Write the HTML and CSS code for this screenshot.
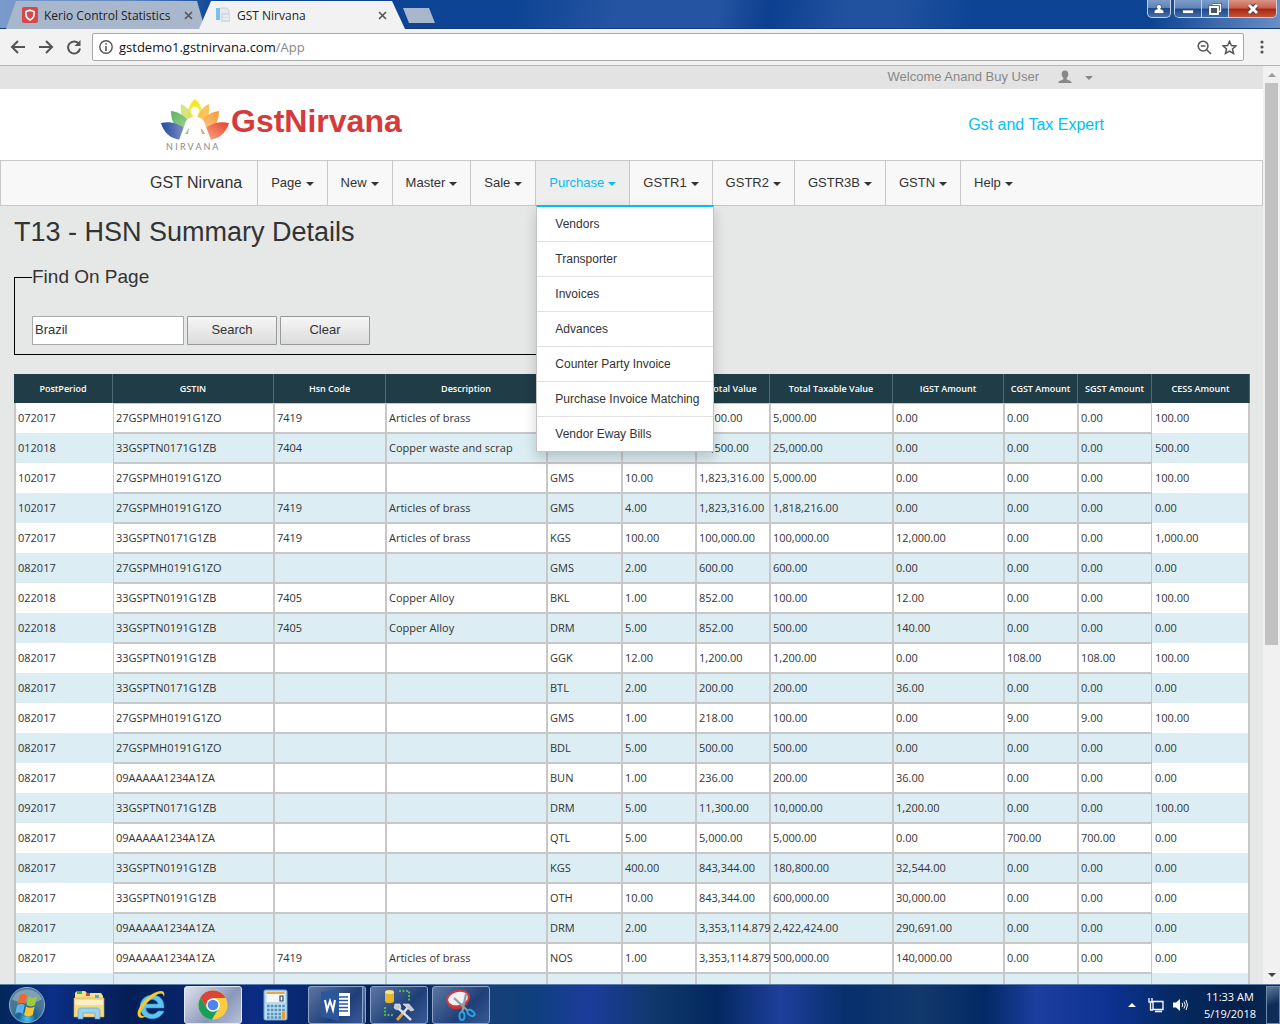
FILE: index.html
```html
<!DOCTYPE html>
<html lang="en">
<head>
<meta charset="utf-8">
<title>GST Nirvana</title>
<link rel="stylesheet" href="styles.css">
</head>
<body>
<div class="tabstrip">
  <div class="tab">
    <svg class="tab-icon" viewBox="0 0 16 16"><rect width="16" height="16" rx="2" fill="#d6494b"/><path d="M8 3.200 12 4.600v3.200c0 2.400-1.800 4-4 5.200-2.200-1.200-4-2.800-4-5.200V4.600z" fill="none" stroke="#fff" stroke-width="1.600"/></svg>
    <span class="tab-title">Kerio Control Statistics</span>
    <button class="tab-close" aria-label="Close tab"><svg viewBox="0 0 9 9"><path d="M1 1l7 7M8 1l-7 7" stroke="#555" stroke-width="1.600"/></svg></button>
  </div>
  <div class="tab tab-active">
    <svg class="tab-icon" viewBox="0 0 16 16"><path d="M1 1h4v12H1z" fill="#7fc0ea"/><path d="M5 1h7l2 3v8H5z" fill="#e3e9ef"/><path d="M6 6h9v9H6z" fill="#d3dbe4"/><path d="M5 1h7l2 3v2" fill="none" stroke="#c3ccd6" stroke-width=".8"/><path d="M8 9h6M8 12h6" stroke="#fff"/></svg>
    <span class="tab-title">GST Nirvana</span>
    <button class="tab-close" aria-label="Close tab"><svg viewBox="0 0 9 9"><path d="M1 1l7 7M8 1l-7 7" stroke="#555" stroke-width="1.600"/></svg></button>
  </div>
  <button class="new-tab" aria-label="New tab"></button>
  <div class="window-buttons">
    <button class="win win-user" aria-label="Profile"><svg viewBox="0 0 14 12"><path d="M7 1.500a2.500 2.500 0 0 1 1.500 4.500c2.500.3 3.500 1.500 3.500 4.500H2c0-3 1-4.200 3.500-4.500A2.500 2.500 0 0 1 7 1.500z" fill="#fff" stroke="#345" stroke-width=".7"/></svg></button>
    <div class="win-group">
      <button class="win" aria-label="Minimize"><svg viewBox="0 0 14 12"><rect x="1.500" y="7" width="11" height="3.500" fill="#fff" stroke="#345" stroke-width=".7"/></svg></button>
      <button class="win" aria-label="Restore"><svg viewBox="0 0 14 12"><path d="M4.500 1.500h8v7H10M2 4h8v7H2z" fill="none" stroke="#345" stroke-width="2.800"/><path d="M4.500 1.500h8v7H10" fill="none" stroke="#fff" stroke-width="1.400"/><path d="M2 4h8v7H2z" fill="#456" stroke="#fff" stroke-width="1.800"/></svg></button>
      <button class="win win-close" aria-label="Close"><svg viewBox="0 0 14 12"><path d="M3 2l8 8M11 2l-8 8" stroke="#533" stroke-width="4.600"/><path d="M3 2l8 8M11 2l-8 8" stroke="#fff" stroke-width="3"/></svg></button>
    </div>
  </div>
</div>
<div class="toolbar">
  <button class="tool" aria-label="Back"><svg viewBox="0 0 16 16"><path d="M15 8H2M8 2L2 8l6 6" /></svg></button>
  <button class="tool" aria-label="Forward"><svg viewBox="0 0 16 16"><path d="M1 8h13M8 2l6 6-6 6"/></svg></button>
  <button class="tool" aria-label="Reload"><svg viewBox="0 0 16 16"><path d="M13 5A6 6 0 1 0 14 9.500"/><path d="M14.500 1v6h-6z" fill="#555" stroke="none"/></svg></button>
  <div class="omnibox">
    <svg class="info" viewBox="0 0 14 14"><circle cx="7" cy="7" r="6.200" fill="none" stroke="#555" stroke-width="1.400"/><path d="M7 6v5M7 3.200v1.600" stroke="#555" stroke-width="1.600"/></svg>
    <span class="url">gstdemo1.gstnirvana.com<span class="path">/App</span></span>
    <svg class="omni-icon" viewBox="0 0 16 16"><circle cx="6.500" cy="6.500" r="5.200"/><path d="M10.300 10.300l4.700 4.700M4 6.500h5"/></svg>
    <svg class="omni-icon" viewBox="0 0 16 16"><path d="M8 1.400l2 4.400 4.900.5-3.700 3.200 1.100 4.800L8 11.800l-4.300 2.500 1.100-4.800L1.100 6.300 6 5.800z"/></svg>
  </div>
  <button class="menu-dots" aria-label="Menu"><svg viewBox="0 0 4 16"><circle cx="2" cy="3" r="1.600"/><circle cx="2" cy="8" r="1.600"/><circle cx="2" cy="13" r="1.600"/></svg></button>
</div>

<div class="viewport">
<div class="page">
  <div class="welcome"><div class="container welcome-inner">
    <span>Welcome Anand Buy User</span>
    <svg class="person" viewBox="0 0 14 14"><path d="M7 .5c2.200 0 3.300 1.500 3.300 3.500S9.300 7.500 8.600 8.200v1c1 .9 4.900 1.300 5.200 3.800H.2c.3-2.500 4.200-2.900 5.200-3.800v-1C4.700 7.500 3.700 6 3.700 4S4.800.5 7 .5z" fill="#888"/></svg>
    <span class="caret"></span>
  </div></div>
  <header class="masthead"><div class="container masthead-inner">
    <svg class="logo" viewBox="0 0 70 52" role="img" aria-label="Nirvana">
      <defs>
        <linearGradient id="b" x2="1"><stop stop-color="#1d4a9e"/><stop offset="1" stop-color="#8f94c6"/></linearGradient>
        <linearGradient id="g" x2="1" y2="1"><stop stop-color="#46a948"/><stop offset="1" stop-color="#a9d7a0"/></linearGradient>
        <linearGradient id="y" x2="0" y2="1"><stop stop-color="#f8e400"/><stop offset="1" stop-color="#f6f0a0"/></linearGradient>
        <linearGradient id="o" x1="1" x2="0" y2="1"><stop stop-color="#f5921e"/><stop offset="1" stop-color="#fbc88a"/></linearGradient>
        <linearGradient id="r" x1="1" x2="0" y2="1"><stop stop-color="#e8402a"/><stop offset="1" stop-color="#f9b08c"/></linearGradient>
      </defs>
      <path d="M35 0C27 7 26 15 31 22h8C44 15 43 7 35 0z" fill="url(#y)"/>
      <path d="M21 5C20 14 22 21 28 28l4-10C30 11 26 7 21 5z" fill="#cfe067" opacity=".85"/>
      <path d="M49 5C50 14 48 21 42 28l-4-10C40 11 44 7 49 5z" fill="#fcb941" opacity=".85"/>
      <path d="M11 12C11 22 15 30 25 35l5-10C26 17 19 13 11 12z" fill="url(#g)" opacity=".9"/>
      <path d="M59 12C59 22 55 30 45 35l-5-10C44 17 51 13 59 12z" fill="url(#o)" opacity=".9"/>
      <path d="M1 24C4 34 10 39 20 41l7-10C18 24 10 22 1 24z" fill="url(#b)"/>
      <path d="M69 24C66 34 60 39 50 41l-7-10C52 24 60 22 69 24z" fill="url(#r)"/>
      <circle cx="35" cy="12" r="4.200" fill="#fff"/>
      <path d="M33 14h4v4c5 1 7 3 8 7l3 8 3 8h-4l-7-11 1 8 4 4H25l4-4 1-8-7 11h-4l3-8 3-8c1-4 3-6 8-7z" fill="#fff"/>
      <path d="M29 29l-4 6h3zM41 29l4 6h-3z" fill="#8fc98f"/>
      <path d="M41 29l4 6h-3z" fill="#fba35a"/>
      <text x="6" y="51" class="logo-text">N I R V A N A</text>
    </svg>
    <span class="site-name">GstNirvana</span>
    <span class="tagline">Gst and Tax Expert</span>
  </div></header>
  <nav class="navbar"><div class="container nav-inner">
    <a class="brand" href="#">GST Nirvana</a>
    <ul class="menu">
      <li><a href="#">Page<span class="caret"></span></a></li>
      <li><a href="#">New<span class="caret"></span></a></li>
      <li><a href="#">Master<span class="caret"></span></a></li>
      <li><a href="#">Sale<span class="caret"></span></a></li>
      <li class="open"><a href="#">Purchase<span class="caret"></span></a>
        <ul class="dropdown">
          <li><a href="#">Vendors</a></li>
          <li><a href="#">Transporter</a></li>
          <li><a href="#">Invoices</a></li>
          <li><a href="#">Advances</a></li>
          <li><a href="#">Counter Party Invoice</a></li>
          <li><a href="#">Purchase Invoice Matching</a></li>
          <li><a href="#">Vendor Eway Bills</a></li>
        </ul>
      </li>
      <li><a href="#">GSTR1<span class="caret"></span></a></li>
      <li><a href="#">GSTR2<span class="caret"></span></a></li>
      <li><a href="#">GSTR3B<span class="caret"></span></a></li>
      <li><a href="#">GSTN<span class="caret"></span></a></li>
      <li><a href="#">Help<span class="caret"></span></a></li>
    </ul>
  </div></nav>
  <main class="content">
    <h1>T13 - HSN Summary Details</h1>
    <fieldset class="find">
      <legend>Find On Page</legend>
      <div class="find-row">
        <input type="text" value="Brazil" aria-label="Find on page">
        <button type="button">Search</button>
        <button type="button">Clear</button>
      </div>
    </fieldset>
    <table class="grid">
      <colgroup><col class="c-period"><col class="c-wide"><col class="c-hsn"><col class="c-wide"><col class="c-unit"><col class="c-num"><col class="c-num"><col class="c-taxable"><col class="c-igst"><col class="c-num"><col class="c-num"><col class="c-cess"></colgroup>
      <thead><tr><th>PostPeriod</th><th>GSTIN</th><th>Hsn Code</th><th>Description</th><th>UQC</th><th>Quantity</th><th>Total Value</th><th>Total Taxable Value</th><th>IGST Amount</th><th>CGST Amount</th><th>SGST Amount</th><th>CESS Amount</th></tr></thead>
      <tbody id="rows"></tbody>
    </table>
  </main>
</div>
<div class="scrollbar"><span class="arrow-up"></span><span class="thumb"></span><span class="arrow-down"></span></div>
</div>

<div class="taskbar">
  <button class="start" aria-label="Start"><svg viewBox="0 0 40 40"><defs><radialGradient id="orb" cy=".9"><stop stop-color="#3fd0f5"/><stop offset=".5" stop-color="#1d5f95"/><stop offset="1" stop-color="#4a7796"/></radialGradient></defs><circle cx="20" cy="20" r="18.500" fill="url(#orb)" stroke="#8fb4cc"/><path d="M4 14a17 16 0 0 1 32 0c-8 5-24 5-32 0z" fill="#fff" opacity=".3"/><path d="M12 10c3-2 5-2 8 0l-2 9c-3-2-5-2-8 0z" fill="#ee6a2c"/><path d="M21.500 11c3 2 6 2 9 0l-2 9c-3 2-6 2-9 0z" fill="#9ccb3c"/><path d="M9.500 20.500c3-2 6-2 8 0l-2 9c-3-2-5-2-8 0z" fill="#5ab4ea"/><path d="M19 21.500c3 2 6 2 9 0l-2 9c-3 2-6 2-9 0z" fill="#fcc32d"/></svg></button>
  <button class="task" aria-label="Explorer"><svg viewBox="0 0 32 32"><path d="M2 4l2-2h8l2 2h14l2 3v18H2z" fill="#f5e18c"/><path d="M4 2h5v3H4z" fill="#3aae4a"/><path d="M13 4h4v3h-4z" fill="#d44"/><path d="M22 6h4v3h-4z" fill="#49b0e0"/><path d="M1 9h30v19H1z" fill="#f4dc85" stroke="#c9a54a" stroke-width=".6"/><path d="M2 11h28v5H2z" fill="#fff" opacity=".5"/><path d="M5 30V22c0-2 1-3 3-3h16c2 0 3 1 3 3v8h-5v-6H10v6z" fill="#9cd2ee" stroke="#5c98bd" stroke-width=".6"/></svg></button>
  <button class="task" aria-label="Internet Explorer"><svg viewBox="0 0 32 32"><path d="M29 19H11c0 7 9 8 12 3h6c-4 11-23 11-24-4C5 3 30 1 29 19zM11 15h12c-1-6-11-6-12 0z" fill="#5ec4f3" stroke="#2a8fd0" stroke-width=".6"/><path d="M29 8c1-4 0-6-3-6C15 2 0 20 3 27c2 3 5 2 9 0-10 2-7-6 1-14S28 1 29 8z" fill="#fbc926"/></svg></button>
  <button class="task running active" aria-label="Chrome"><svg viewBox="0 0 32 32"><circle cx="16" cy="16" r="14.500" fill="#fbcd3f"/><path d="M16 16L3.400 8.800A14.500 14.500 0 0 1 28.600 9H16z" fill="#db4437"/><path d="M3.400 8.800A14.500 14.500 0 0 0 15 30.500l6.500-11L16 16l-6 3z" fill="#1a9f5b"/><path d="M3.400 8.800L10 19l6-3-3-7z" fill="#db4437"/><circle cx="16" cy="16" r="6.800" fill="#fff"/><circle cx="16" cy="16" r="5.300" fill="#4a86ee"/></svg></button>
  <button class="task" aria-label="Calculator"><svg viewBox="0 0 32 32"><rect x="5" y="1" width="23" height="30" rx="1.500" fill="#b9dcf2" stroke="#6da6cd"/><rect x="7.500" y="3" width="18" height="10" fill="#f3f7f8"/><path d="M7.500 3h18v2h-18z" fill="#f1a33c"/><path d="M21 7h3v5h-3z" fill="none" stroke="#345" stroke-width="1.200"/><path d="M8 17h18M8 21h18M8 25h18M8 28.500h18" stroke="#5a8fb8" stroke-width="2.600" stroke-dasharray="2.600 1.200"/><path d="M23 23h3v7h-3z" fill="#f09a2c"/></svg></button>
  <button class="task running stacked" aria-label="Word"><svg viewBox="0 0 32 32"><path d="M17 4h13v23H17z" fill="#fff"/><path d="M19 8h9M19 11.500h9M19 15h9M19 18.500h9M19 22h9" stroke="#2b579a" stroke-width="1.600"/><path d="M1 3l18-3v32L1 28z" fill="#2b579a"/><path d="M5 11l2 10 3-9 3 9 2-10" fill="none" stroke="#fff" stroke-width="2"/></svg></button>
  <button class="task running" aria-label="SQL tools"><svg viewBox="0 0 32 32"><path d="M2 3v9c0 3 9 3 9 0V3z" fill="#e5b52d"/><ellipse cx="6.500" cy="3" rx="4.500" ry="2" fill="#f9e28a"/><path d="M16 2h10v10M2 18v8h9" fill="none" stroke="#5ed43c" stroke-width="1.600" stroke-dasharray="2 1.500"/><path d="M14 31l8-9" stroke="#e4a03a" stroke-width="3"/><path d="M14 18l14 13M21 23l5-6" stroke="#d9dee4" stroke-width="2.400"/><path d="M12 15l5 0 1 4-4 2-3-2zM20 15l6 0 5 6-3 1-4-3z" fill="#c3cad2" stroke="#eef1f4" stroke-width=".6"/></svg></button>
  <button class="task running" aria-label="Snipping Tool"><svg viewBox="0 0 32 32"><ellipse cx="13" cy="12" rx="11" ry="8" fill="#c83236" transform="rotate(-15 13 12)"/><ellipse cx="13" cy="9.500" rx="11" ry="7.500" fill="#f1f1f4" stroke="#cf3b3f" stroke-width="2" transform="rotate(-15 13 9.500)"/><path d="M9 9l14 13M21 5l-4 19" stroke="#8e9aa6" stroke-width="2.200"/><ellipse cx="17" cy="27" rx="2.500" ry="4" fill="none" stroke="#2aa4e0" stroke-width="2"/><ellipse cx="26" cy="24" rx="4" ry="2.500" fill="none" stroke="#2aa4e0" stroke-width="2" transform="rotate(35 26 24)"/></svg></button>
  <div class="tray">
    <span class="tray-up"></span>
    <svg class="tray-icon" viewBox="0 0 16 16"><path d="M5 4.500h10v8H5zM7 14.500h7M2.500 6v7H5M1 1v4h3V1" fill="none" stroke="#fff" stroke-width="1.300"/></svg>
    <svg class="tray-icon" viewBox="0 0 16 16"><path d="M1 5.500h3L8 2v12l-4-3.500H1z" fill="#fff"/><path d="M10 6q1.500 2 0 4M12 4.500q2.500 3.500 0 7M14 3q3 5 0 10" fill="none" stroke="#fff"/></svg>
    <div class="clock"><span>11:33 AM</span><span>5/19/2018</span></div>
    <button class="show-desktop" aria-label="Show desktop"></button>
  </div>
</div>
<script src="rows.js"></script>
</body>
</html>
```
FILE: rows.js
```js
const rows = [
  "072017|27GSPMH0191G1ZO|7419|Articles of brass|GMS|10.00|5,100.00|5,000.00|0.00|0.00|0.00|100.00",
  "012018|33GSPTN0171G1ZB|7404|Copper waste and scrap|KGS|50.00|25,500.00|25,000.00|0.00|0.00|0.00|500.00",
  "102017|27GSPMH0191G1ZO|||GMS|10.00|1,823,316.00|5,000.00|0.00|0.00|0.00|100.00",
  "102017|27GSPMH0191G1ZO|7419|Articles of brass|GMS|4.00|1,823,316.00|1,818,216.00|0.00|0.00|0.00|0.00",
  "072017|33GSPTN0171G1ZB|7419|Articles of brass|KGS|100.00|100,000.00|100,000.00|12,000.00|0.00|0.00|1,000.00",
  "082017|27GSPMH0191G1ZO|||GMS|2.00|600.00|600.00|0.00|0.00|0.00|0.00",
  "022018|33GSPTN0191G1ZB|7405|Copper Alloy|BKL|1.00|852.00|100.00|12.00|0.00|0.00|100.00",
  "022018|33GSPTN0191G1ZB|7405|Copper Alloy|DRM|5.00|852.00|500.00|140.00|0.00|0.00|0.00",
  "082017|33GSPTN0191G1ZB|||GGK|12.00|1,200.00|1,200.00|0.00|108.00|108.00|100.00",
  "082017|33GSPTN0171G1ZB|||BTL|2.00|200.00|200.00|36.00|0.00|0.00|0.00",
  "082017|27GSPMH0191G1ZO|||GMS|1.00|218.00|100.00|0.00|9.00|9.00|100.00",
  "082017|27GSPMH0191G1ZO|||BDL|5.00|500.00|500.00|0.00|0.00|0.00|0.00",
  "082017|09AAAAA1234A1ZA|||BUN|1.00|236.00|200.00|36.00|0.00|0.00|0.00",
  "092017|33GSPTN0171G1ZB|||DRM|5.00|11,300.00|10,000.00|1,200.00|0.00|0.00|100.00",
  "082017|09AAAAA1234A1ZA|||QTL|5.00|5,000.00|5,000.00|0.00|700.00|700.00|0.00",
  "082017|33GSPTN0191G1ZB|||KGS|400.00|843,344.00|180,800.00|32,544.00|0.00|0.00|0.00",
  "082017|33GSPTN0191G1ZB|||OTH|10.00|843,344.00|600,000.00|30,000.00|0.00|0.00|0.00",
  "082017|09AAAAA1234A1ZA|||DRM|2.00|3,353,114.879|2,422,424.00|290,691.00|0.00|0.00|0.00",
  "082017|09AAAAA1234A1ZA|7419|Articles of brass|NOS|1.00|3,353,114.879|500,000.00|140,000.00|0.00|0.00|0.00",
  "082017|09AAAAA1234A1ZA|||NOS|1.00|500,000.00|500,000.00|0.00|12,500.00|12,500.00|0.00"
];
const body = document.getElementById("rows");
for (const row of rows) {
  const tr = body.insertRow();
  for (const value of row.split("|")) tr.insertCell().textContent = value;
}
```
FILE: styles.css
```css
* { box-sizing: border-box; }
body {
  margin: 0;
  height: 100vh;
  display: flex;
  flex-direction: column;
  overflow: hidden;
  font-family: "Liberation Sans", Arial, sans-serif;
  font-size: 13px;
  color: #333;
  background: #e5e8e7;
}
button { padding: 0; border: 0; background: none; font: inherit; color: inherit; }
svg { display: block; }
a { color: inherit; text-decoration: none; }
ul { margin: 0; padding: 0; list-style: none; }

/* Browser tabs */
.tabstrip {
  flex: none;
  height: 29px;
  display: flex;
  padding-left: 6px;
  border-bottom: 1px solid #143a78;
  background: linear-gradient(100deg, #7a9bcb 0, #5f88c2 10%, #0d4494 17%, #0d4494 40%, #2454a2 48%, #2454a2 56%, #0d3f90 60%, #2052a0 66%, #2052a0 70%, #0d4494 76%, #0d4494 90%, #6b8fc6 100%);
}
.tab {
  width: 199px;
  height: 28px;
  margin-top: 1px;
  padding: 0 12px 0 16px;
  display: flex;
  align-items: center;
  gap: 6px;
  font-family: "Open Sans", sans-serif;
  font-size: 12px;
  color: #222;
  background: #a9b7cd;
  clip-path: polygon(10px 0, 191px 0, 100% 100%, 0 100%);
}
.tab-active {
  position: relative;
  background: #f2f2f2;
  margin-left: -6px;
  width: 206px;
  clip-path: polygon(12px 0, 193px 0, 100% 100%, 0 100%);
  padding-right: 18px;
}
.tab-icon { width: 16px; height: 16px; }
.tab-title { flex: 1; white-space: nowrap; }
.tab-close svg { width: 9px; height: 9px; }
.new-tab {
  width: 32px;
  height: 15px;
  margin: 8px 0 0 -2px;
  background: #a9b7cd;
  clip-path: polygon(0 0, 26px 0, 100% 100%, 6px 100%);
}
.window-buttons { margin-left: auto; padding-right: 3px; display: flex; gap: 3px; height: 18px; }
.win {
  width: 27px;
  height: 18px;
  display: grid;
  place-items: center;
  background: linear-gradient(#7d9cc8, #5f84ba 45%, #1f4888 50%, #4370b0);
  border-right: 1px solid #c0cfe4;
}
.win svg { width: 14px; height: 12px; }
.win-user, .win-group { border: 1px solid #c6d3e6; border-top: 0; border-radius: 0 0 5px 5px; overflow: hidden; }
.win-user { width: 24px; }
.win-group { display: flex; }
.win-close { width: 47px; border: 0; background: linear-gradient(#d99484, #c8604c 45%, #a8260f 50%, #c85a3c); }

/* Browser toolbar */
.toolbar {
  flex: none;
  height: 37px;
  display: flex;
  align-items: center;
  padding: 0 16px 0 10px;
  gap: 12px;
  background: #f2f2f2;
  border-bottom: 1px solid #b6b4b6;
}
.tool svg { width: 16px; height: 16px; fill: none; stroke: #555; stroke-width: 2; }
.omnibox {
  flex: 1;
  height: 28px;
  display: flex;
  align-items: center;
  gap: 10px;
  padding: 0 6px;
  margin: 0 4px 0 -2px;
  background: #fff;
  border: 1px solid #a9a9a9;
  border-radius: 2px;
}
.info { width: 14px; height: 14px; }
.url { flex: 1; margin-left: -4px; font: 13px "Open Sans", sans-serif; color: #111; }
.path { color: #888; }
.omni-icon { width: 15px; height: 15px; fill: none; stroke: #555; stroke-width: 1.6; }
.menu-dots svg { width: 4px; height: 16px; fill: #555; }

/* Page area */
.viewport { flex: 1; min-height: 0; display: flex; overflow: hidden; }
.page { flex: 1; min-width: 0; }
.container { width: 100%; max-width: 963px; margin: 0 auto; display: flex; align-items: center; }
.caret {
  display: inline-block;
  margin: 3px 0 0 4px;
  border: 4px solid transparent;
  border-top-color: currentColor;
  border-bottom: 0;
  vertical-align: middle;
}
.welcome { background: #e3e3e3; color: #888; }
.welcome-inner { height: 23px; justify-content: flex-end; padding: 0 20px 2px 0; }
.person { width: 14px; height: 14px; margin: 0 9px 0 19px; }
.masthead { background: #fff; }
.masthead-inner { height: 71px; padding: 0 9px 0 10px; }
.logo { width: 70px; height: 52px; }
.logo-text { font: 9px "Lato", sans-serif; fill: #888; }
.site-name { padding: 0 0 6px 1px; font-size: 32px; font-weight: bold; color: #d63a3a; }
.tagline { margin-left: auto; font-size: 16px; color: #00bff3; }
.navbar { background: #f8f8f8; border: 1px solid #c8c8c8; }
.nav-inner { height: 44px; align-items: stretch; }
.brand { display: flex; align-items: center; padding-right: 15px; font-size: 16px; white-space: nowrap; }
.menu { display: flex; }
.menu > li { position: relative; display: flex; border-left: 1px solid #c8c8c8; }
.menu > li > a { display: flex; align-items: center; padding: 0 13px 2px; }
.menu > .open > a { color: #00bff3; background: #eee; }
.dropdown {
  position: absolute;
  top: 44px;
  left: 0;
  width: 178px;
  background: #fff;
  border: 1px solid #c4c4c4;
  border-top: 2px solid #00bff3;
  box-shadow: 0 6px 12px rgba(0, 0, 0, .18);
  font-size: 12px;
}
.dropdown li { border-bottom: 1px solid #e2e2e2; }
.dropdown li:last-child { border-bottom: 0; }
.dropdown a { display: block; padding: 0 18px; line-height: 34px; white-space: nowrap; }

.content { padding: 8px 13px 0 14px; }
h1 { margin: 0; font-size: 27px; line-height: 36px; font-weight: normal; }
.find { width: 50%; margin: 14px 0 19px; padding: 0 17px 9px; border: 1px solid #000; }
.find legend { width: 100%; padding: 0; font-size: 19px; line-height: 26px; }
.find-row { display: flex; gap: 3px; padding-top: 26px; }
.find input { width: 152px; height: 29px; padding: 0 2px 2px; border: 1px solid #a9a9a9; font: inherit; color: inherit; background: #fff; }
.find button { width: 90px; height: 29px; padding-bottom: 2px; border: 1px solid #999; border-radius: 1px; background: linear-gradient(#f6f6f6, #dcdcdc); }

.grid {
  width: 100%;
  table-layout: fixed;
  border-collapse: separate;
  border-spacing: 0;
  font: 11px "Open Sans", sans-serif;
}
.c-period { width: 99px; }
.c-wide { width: 161px; }
.c-hsn { width: 112px; }
.c-unit { width: 75px; }
.c-num { width: 74px; }
.c-taxable { width: 123px; }
.c-igst { width: 111px; }
.grid th { height: 29px; padding: 0; background: #203c46; color: #fff; font-size: 9px; font-weight: 600; border-right: 1px solid #4c6a72; white-space: nowrap; }
.grid td {
  height: 30px;
  padding: 0 2px 2px;
  background: #fff;
  border: 1px solid #c8c8c8;
  white-space: nowrap;
}
.grid td:first-child { border-width: 0 0 0 2px; }
.grid td:last-child { border-width: 0 2px 0 0; padding-left: 3px; }
.grid tbody tr:nth-child(even) td { background: #dceef3; }

.scrollbar { width: 17px; display: flex; flex-direction: column; align-items: center; background: #f1f1f1; }
.arrow-up { margin: 7px 0 6px; border: 4px solid transparent; border-top: 0; border-bottom-color: #999; }
.thumb { width: 13px; height: 562px; background: #c1c1c1; }
.arrow-down { margin: auto 0 7px; border: 4px solid transparent; border-bottom: 0; border-top-color: #444; }

/* Taskbar */
.taskbar {
  flex: none;
  height: 40px;
  display: flex;
  align-items: center;
  padding-left: 7px;
  border-top: 1px solid #5d7ea8;
  background: linear-gradient(90deg, #03265a 0, #0a2f86 4%, #041f56 10%, #0b2c84 20%, #03204f 30%, #173f74 38%, #0f3f80 42%, #1c3c9c 46%, #10386c 51%, #03285f 56%, #1f3f9c 61%, #06306c 66%, #12386c 72%, #032a66 77%, #1c3fa0 81%, #0c3190 87%, #042a60 92%, #041f4a 97%, #0b2c5a 100%);
}
.start { margin-right: 13px; }
.start svg { width: 40px; height: 38px; }
.task { width: 58px; height: 38px; margin-right: 4px; display: grid; place-items: center; border-radius: 3px; }
.task svg { width: 32px; height: 32px; }
.running { border: 1px solid #8ea4c6; background: linear-gradient(135deg, #5c76a4, #1f3f78 60%, #3a5a96); }
.active { background: linear-gradient(135deg, #dfe3ee, #8997ba 60%, #b8c1d8); border-color: #e4e8f0; }
.stacked { border-right: 4px double #8ea4c6; }
.tray { margin-left: auto; height: 100%; display: flex; align-items: center; color: #fff; font: 11px "Open Sans", sans-serif; }
.tray-up { margin-right: 12px; border: 4px solid transparent; border-top: 0; border-bottom-color: #fff; }
.tray-icon { width: 16px; height: 16px; margin-right: 8px; }
.clock { display: flex; flex-direction: column; align-items: center; line-height: 17px; margin: 0 10px 0 8px; }
.show-desktop { width: 14px; height: 38px; border: 1px solid #6d89a8; background: linear-gradient(160deg, #5d7898, #0d2c58 50%); }
```
